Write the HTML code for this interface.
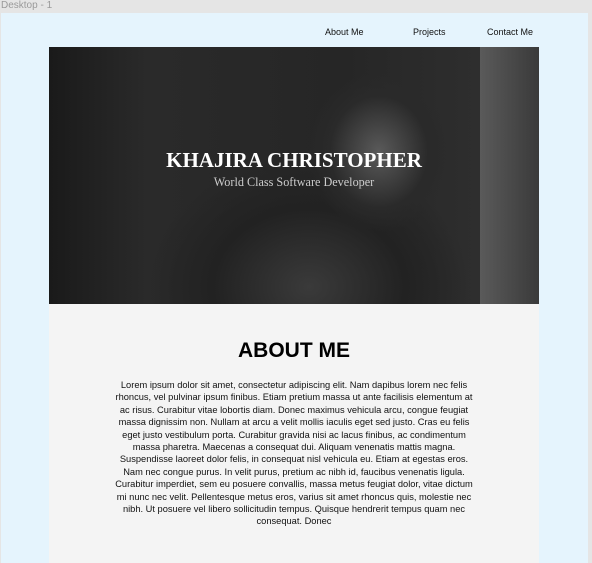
<!DOCTYPE html>
<html><head><style>
*{margin:0;padding:0}
body{width:592px;height:563px;background:#e5e5e5;font-family:"Liberation Sans",sans-serif;position:relative;overflow:hidden}
.t{position:absolute;left:1px;top:0;font-size:10px;color:#9a9a9a}
.f{position:absolute;left:1px;top:13px;width:587px;height:550px;background:#e5f4fd}
.nav{position:absolute;top:27px;font-size:9px;color:#111}
.hero{position:absolute;left:49px;top:47px;width:490px;height:257px;background:
radial-gradient(ellipse 70px 80px at 330px 105px,#5a5a5a,#2a2a2a 70%,transparent 100%),
radial-gradient(ellipse 160px 130px at 260px 240px,#3a3a3a,#222 60%,transparent 100%),
linear-gradient(90deg,#1a1a1a 0,#2a2a2a 20%,#262626 60%,#2e2e2e 88%,#5a5a5a 88%,#3a3a3a 100%);overflow:hidden}
.h1{position:absolute;left:0;width:100%;top:101px;text-align:center;color:#fff;font-family:"Liberation Serif",serif;font-weight:bold;font-size:21px}
.h2{position:absolute;left:0;width:100%;top:128px;text-align:center;color:#ccc;font-family:"Liberation Serif",serif;font-size:12.2px}
.ab{position:absolute;left:49px;top:304px;width:490px;height:259px;background:#f4f4f4}
.ab h2{position:absolute;top:35px;width:100%;text-align:center;font-size:21px;font-weight:900;color:#000}
.ab p{position:absolute;top:75px;width:100%;text-align:center;font-size:9.3px;line-height:12.4px;color:#111;white-space:nowrap}
</style></head><body>
<div class="t">Desktop - 1</div>
<div class="f"></div>
<div class="nav" style="left:325px">About Me</div>
<div class="nav" style="left:413px">Projects</div>
<div class="nav" style="left:487px">Contact Me</div>
<div class="hero">
<div class="h1">KHAJIRA CHRISTOPHER</div>
<div class="h2">World Class Software Developer</div>
</div>
<div class="ab"><h2>ABOUT ME</h2>
<p>Lorem ipsum dolor sit amet, consectetur adipiscing elit. Nam dapibus lorem nec felis<br>rhoncus, vel pulvinar ipsum finibus. Etiam pretium massa ut ante facilisis elementum at<br>ac risus. Curabitur vitae lobortis diam. Donec maximus vehicula arcu, congue feugiat<br>massa dignissim non. Nullam at arcu a velit mollis iaculis eget sed justo. Cras eu felis<br>eget justo vestibulum porta. Curabitur gravida nisi ac lacus finibus, ac condimentum<br>massa pharetra. Maecenas a consequat dui. Aliquam venenatis mattis magna.<br>Suspendisse laoreet dolor felis, in consequat nisl vehicula eu. Etiam at egestas eros.<br>Nam nec congue purus. In velit purus, pretium ac nibh id, faucibus venenatis ligula.<br>Curabitur imperdiet, sem eu posuere convallis, massa metus feugiat dolor, vitae dictum<br>mi nunc nec velit. Pellentesque metus eros, varius sit amet rhoncus quis, molestie nec<br>nibh. Ut posuere vel libero sollicitudin tempus. Quisque hendrerit tempus quam nec<br>consequat. Donec</p></div>
</body></html>
